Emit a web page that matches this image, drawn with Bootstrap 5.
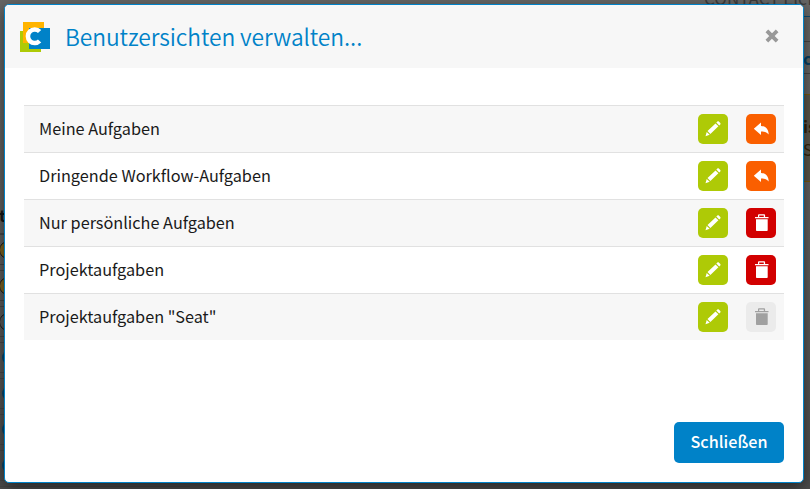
<!DOCTYPE html>
<html lang="de">
<head>
<meta charset="utf-8">
<meta name="viewport" content="width=device-width, initial-scale=1">
<title>Benutzersichten verwalten</title>
<link href="https://cdn.jsdelivr.net/npm/bootstrap@5.3.0/dist/css/bootstrap.min.css" rel="stylesheet">
<style>
body{font-family:"Noto Sans CJK SC","Open Sans",sans-serif;font-size:16.25px;color:#1a1a1a;background:#565656;width:810px;height:489px;overflow:hidden}
/* dimmed page behind the dialog */
.page{background:linear-gradient(#666665,#5f5f5e 50%,#4c4c4c)}
.page-left{width:190px;padding-top:203px;overflow:hidden}
.col-head{height:31px;line-height:24px;font-weight:700;border-bottom:1px solid #484848;color:#161616;margin-left:-1px}
.task-line{height:31px;flex:none;margin-bottom:5px;border-top:1px solid #464646;border-bottom:1px solid #464646}
.ring{width:18px;height:18px;border-radius:50%;border:1px solid #1c1c1c;margin-left:-1px}
.ring.amber{background:#7c6220}
.dot{width:15px;height:15px;border-radius:50%;background:#07466c;margin-left:2px}
.page-right{width:106px;overflow:hidden;white-space:nowrap}
.brandline{display:flow-root;height:16px;line-height:16px;font-size:17px;color:#3b3b3b}
.brandline span{display:block;margin-top:-10px}
.band{margin-left:99px}
.tab-link{height:33px;line-height:33px;font-weight:700;color:#063f62;border-top:1px solid #444;border-bottom:1px solid #444}
.spacer-top{height:25px;border-top:1px solid #0c4a70}
.hint-box{height:88px;margin-top:20px;background:#5a564a;border-top:1px solid #74590f;border-bottom:1px solid #74590f;line-height:23px;padding-top:20px;color:#33240a}
.dlg{left:4px;top:4px;width:800px;height:479px;border:1px solid #0082c8;border-radius:5px;background:#fff;box-shadow:0 5px 15px rgba(0,0,0,.5);overflow:hidden}
.dlg-head{height:63px;background:#f7f7f7;padding:0 24px 0 15px}
.dlg-title{font-size:22.8px;line-height:30px;color:#0082c8;font-weight:350;margin-left:15px;padding-top:1px;letter-spacing:-.07px;white-space:nowrap}
.views{margin:37px 19px 0}
.view-row{height:47px;border-top:1px solid #e1e1e1;padding:0 8px 0 15px;line-height:24px}
.view-row:nth-child(odd){background:#f7f7f7}
.label{white-space:nowrap;padding-bottom:2px}
.tool{width:30px;height:30px;border:0;border-radius:5px;color:#fff;padding:0}
.tool svg{display:block}
.t-edit{background:#aeca06}.t-undo{background:#fa5f00}.t-del{background:#d20000}.t-off{background:#ebebeb;color:#a0a0a0}
.tools{gap:18px}
.b-close{width:110px;height:41px;background:#0082c8;color:#fff;border:0;border-radius:5px;font-weight:500;font-size:16.2px;padding:0 0 3px}
.dlg-foot{padding:0 19px 19px}
.x-btn{border:0;background:none;padding:0 0 2px;color:#999}
</style>
<script src="https://cdn.jsdelivr.net/npm/bootstrap@5.3.0/dist/js/bootstrap.bundle.min.js"></script>
</head>
<body>
<svg class="d-none">
<symbol id="i-edit" viewBox="0 0 30 30"><path fill="currentColor" d="M7.500 22.200l1.200-4.300 3 2.900zM9.500 17l8-7.600 2.900 2.900-8 7.700zM18.300 8.600l1.100-1c.5-.5 1-.5 1.400 0l1.500 1.500c.4.4.4.9 0 1.400l-1.100 1z"/></symbol>
<symbol id="i-undo" viewBox="0 0 30 30"><path fill="currentColor" d="M7.800 14.800L15 8.600v3.400c4.400.2 7.600 3 7.700 8.600-1.800-2.400-4.200-3.200-7.700-3.100v3.500z"/></symbol>
<symbol id="i-del" viewBox="0 0 30 30"><path fill="currentColor" fill-rule="evenodd" d="M9 9h3V7.200c0-.5.400-.9.900-.9h5.300c.5 0 .9.400.9.900V9H22.500v1.300H9zM13.200 9h4.600V7.400h-4.600zM10 11.200h11.700v11c0 .5-.3.800-.8.800H10.800c-.5 0-.8-.3-.8-.8z"/></symbol>
</svg>
<div class="page d-flex h-100">
  <div class="page-left d-flex flex-column">
    <div class="col-head flex-shrink-0">t</div>
    <div class="task-line d-flex align-items-center"><div class="ring amber"></div></div>
    <div class="task-line d-flex align-items-center"><div class="ring amber"></div></div>
    <div class="task-line d-flex align-items-center"><div class="ring"></div></div>
    <div class="task-line d-flex align-items-center"><div class="dot"></div></div>
    <div class="task-line d-flex align-items-center"><div class="dot"></div></div>
    <div class="task-line d-flex align-items-center"><div class="dot"></div></div>
    <div class="task-line d-flex align-items-center"><div class="dot"></div></div>
    <div class="task-line"></div>
  </div>
  <div class="flex-grow-1"></div>
  <div class="page-right">
    <div class="brandline"><span>CONTACT Elements</span></div>
    <div class="band">
      <div class="spacer-top"></div>
      <div class="tab-link">c</div>
      <div class="hint-box"><b>is</b><br>S</div>
    </div>
  </div>
</div>
<div class="dlg position-absolute d-flex flex-column">
  <div class="dlg-head d-flex align-items-center">
    <svg width="30" height="30" viewBox="0 0 30 30"><path fill="#aeca06" d="M0 9h21v21H0z"/><path fill="#ffb400" d="M3 0h21v21H3z"/><path fill="#0082c8" d="M9 6h21v21H9z"/><path d="M19.600 9.500A6.800 6.800 0 1 0 19.600 19" fill="none" stroke="#fff" stroke-width="4.600"/></svg>
    <h1 class="dlg-title mb-0">Benutzersichten verwalten...</h1>
    <button class="x-btn ms-auto" aria-label="Schließen"><svg class="d-block" width="14" height="14" viewBox="0 0 14 14"><path d="M3.200 3.200l7.600 7.600M10.800 3.200l-7.600 7.600" stroke="currentColor" stroke-width="3.800" stroke-linecap="square"/></svg></button>
  </div>
  <div class="views">
    <div class="view-row d-flex align-items-center"><span class="label">Meine Aufgaben</span><div class="tools d-flex ms-auto"><button class="tool t-edit"><svg width="30" height="30"><use href="#i-edit"/></svg></button><button class="tool t-undo"><svg width="30" height="30"><use href="#i-undo"/></svg></button></div></div>
    <div class="view-row d-flex align-items-center"><span class="label">Dringende Workflow-Aufgaben</span><div class="tools d-flex ms-auto"><button class="tool t-edit"><svg width="30" height="30"><use href="#i-edit"/></svg></button><button class="tool t-undo"><svg width="30" height="30"><use href="#i-undo"/></svg></button></div></div>
    <div class="view-row d-flex align-items-center"><span class="label">Nur persönliche Aufgaben</span><div class="tools d-flex ms-auto"><button class="tool t-edit"><svg width="30" height="30"><use href="#i-edit"/></svg></button><button class="tool t-del"><svg width="30" height="30"><use href="#i-del"/></svg></button></div></div>
    <div class="view-row d-flex align-items-center"><span class="label">Projektaufgaben</span><div class="tools d-flex ms-auto"><button class="tool t-edit"><svg width="30" height="30"><use href="#i-edit"/></svg></button><button class="tool t-del"><svg width="30" height="30"><use href="#i-del"/></svg></button></div></div>
    <div class="view-row d-flex align-items-center"><span class="label">Projektaufgaben "Seat"</span><div class="tools d-flex ms-auto"><button class="tool t-edit"><svg width="30" height="30"><use href="#i-edit"/></svg></button><button class="tool t-off" disabled><svg width="30" height="30"><use href="#i-del"/></svg></button></div></div>
  </div>
  <div class="dlg-foot mt-auto d-flex justify-content-end"><button class="b-close">Schließen</button></div>
</div>
</body>
</html>
